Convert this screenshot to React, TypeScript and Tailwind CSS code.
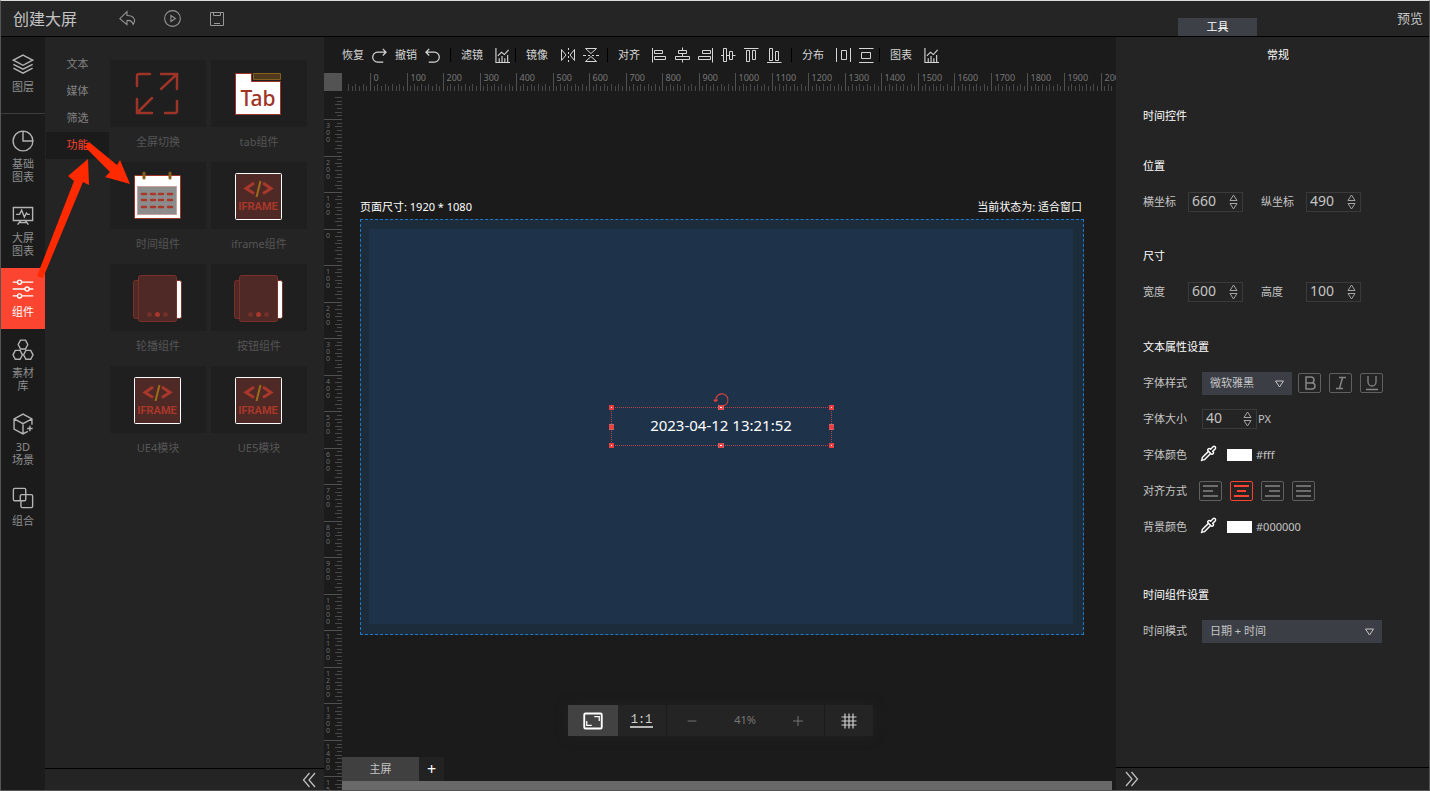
import { useState, type ReactNode } from 'react';
import { Pipette } from 'lucide-react';

interface IconProps {
  children: ReactNode;
  size?: number;
  className?: string;
}

// outline icons, drawn on a 16 unit grid
function Icon({ children, size = 15, className = '' }: IconProps) {
  return (
    <svg
      width={size}
      height={size}
      viewBox="0 0 16 16"
      fill="none"
      stroke="currentColor"
      strokeWidth="1"
      className={`shrink-0 ${className}`}>
      {children}
    </svg>
  );
}

const redoIcon = (
  <Icon>
    <path d="M11.500 1l3.500 3.500L11.500 8M15 4.500H6a5 5 0 0 0 0 10.500h6" strokeWidth="1.300" />
  </Icon>
);
const undoIcon = (
  <Icon>
    <path d="M4.500 1L1 4.500 4.500 8M1 4.500h9a5 5 0 0 1 0 10.500H4" strokeWidth="1.300" />
  </Icon>
);
const chartIcon = (
  <Icon>
    <path
      d="M1 0v15.500h15M4.500 15v-4M7.500 15V8.500M10.500 15v-4M13.500 15V7.500M3 8.500l4-4 3 2.500 4.500-5"
      strokeWidth="1.200"
    />
  </Icon>
);

const tools = {
  flipX: <path d="M1.500 2.500v11L6 8zM14.500 2.500v11L10 8zM8.500 1v2M8.500 5v2M8.500 9v2M8.500 13v2" />,
  flipY: <path d="M2.500 1.500h11L8 6.500zM2.500 14.500h11L8 9.500zM0 8.500h3M5 8.500h2M9 8.500h2M13 8.500h3" />,
  left: <path d="M.5 1v14.500M2.500 3.500h8v3h-8zM2.500 9.500h11v3h-11z" />,
  centerX: <path d="M7.500 .5v3M7.500 6.500v3M7.500 12.500v3M3.500 3.500h8v3h-8zM.5 9.500h14v3h-14z" />,
  right: <path d="M14.500 1v14.500M4.500 3.500h8v3h-8zM.5 9.500h12v3h-12z" />,
  centerY: <path d="M0 8.500h2.500M5.500 8.500h3M11.500 8.500h3M2.500 1.500h3v13h-3zM8.500 4.500h3v8h-3z" />,
  top: <path d="M0 1.500h14.500M2.500 3.500h3v11h-3zM8.500 3.500h3v9h-3z" />,
  bottom: <path d="M0 15.500h14.500M2.500 1.500h3v12h-3zM8.500 4.500h3v9h-3z" />,
  spreadX: <path d="M.5 1v14M14.500 1v14M5.500 3.500h5v9h-5z" />,
  spreadY: <path d="M0 1.500h14.500M0 15.500h14.500M2.500 5.500h9v6h-9z" />,
};

type ToolName = keyof typeof tools;

function Tools({ names, className = '' }: { names: ToolName[]; className?: string }) {
  return (
    <div className={`ml-3 flex ${className}`}>
      {names.map((name) => (
        <button key={name} type="button" aria-label={name}>
          <Icon size={16}>{tools[name]}</Icon>
        </button>
      ))}
    </div>
  );
}

const navItems = [
  {
    lines: ['图层'],
    icon: <path d="M8 1.500l7 3.700-7 3.700-7-3.700zM1 8.200l7 3.600 7-3.600M1 11l7 3.700 7-3.700" />,
  },
  {
    lines: ['基础', '图表'],
    icon: <path d="M8 .8a7.200 7.200 0 1 0 7.200 7.200H8zM8 .8A7.200 7.200 0 0 1 15.200 8" />,
  },
  {
    lines: ['大屏', '图表'],
    icon: <path d="M1 2.500h14v9.500H1zM3 7.500h2.500L7 4.500l2 5 1.500-3 .8 1H13M6.500 12L4 15M9.500 12l2.500 3M5.500 13.500h5" />,
  },
  {
    lines: ['组件'],
    icon: (
      <>
        <path d="M.5 3H4M7 3h8.500M.5 8h9M12.500 8h3M.5 13H4M7 13h8.500" />
        <circle cx="5.500" cy="3" r="1.500" />
        <circle cx="11" cy="8" r="1.500" />
        <circle cx="5.500" cy="13" r="1.500" />
      </>
    ),
  },
  {
    lines: ['素材', '库'],
    icon: (
      <path d="M6.200.8h3.600l1.700 3.200-1.700 3.300H6.200L4.500 4zM2.400 8.300h3.500l1.700 3.200-1.700 3.200H2.400L.7 11.500zM10.100 8.300h3.500l1.700 3.200-1.700 3.200h-3.500l-1.700-3.200z" />
    ),
  },
  {
    lines: ['3D', '场景'],
    icon: <path d="M14.500 8.500V4.300L8 .8 1.500 4.300v7.400L8 15.200l3.500-1.900M1.500 4.300L8 7.800l6.500-3.500M8 7.800v7.400M13 9.300v4M11 11.300h4" />,
  },
  {
    lines: ['组合'],
    icon: <path d="M6 10H2a1 1 0 0 1-1-1V2a1 1 0 0 1 1-1h7a1 1 0 0 1 1 1v3.500H7a1 1 0 0 0-1 1zM6.500 10v4a1 1 0 0 0 1 1H14a1 1 0 0 0 1-1V6.500a1 1 0 0 0-1-1h-4V9a1 1 0 0 1-1 1z" />,
  },
];

const fullscreenArt = (
  <path
    d="M2 14V4a2 2 0 0 1 2-2h11M26 2h16v15M41 3L26 17M2 27v14h15M3 40l14-14M42 29v10a2 2 0 0 1-2 2h-10"
    fill="none"
    stroke="#9e3327"
    strokeWidth="2.500"
    strokeLinecap="round"
  />
);

const tabArt = (
  <>
    <path d="M-.5 1.500H15.500V9.500H44.500V42.500H-.5z" fill="#fff" stroke="#9e3327" />
    <path d="M17.500 1.500h27v6h-27z" fill="#4f3a1e" stroke="#86601e" />
    <text x="22" y="34" textAnchor="middle" fontSize="21" fontWeight="500" fill="#9e3327">
      Tab
    </text>
  </>
);

const calendarArt = (
  <>
    <rect x="-.5" y="1.500" width="46" height="43" rx="1" fill="#fff" stroke="#9e3327" />
    <rect x="2.500" y="12.500" width="39" height="28" fill="#8c8c8c" stroke="#c9a29d" />
    <path d="M9 -1v5M35 -1v5" stroke="#86601e" strokeWidth="3" strokeLinecap="round" />
    <path
      d="M7 20h4M16 20h4M24 20h4M33 20h4M7 26h4M16 26h4M24 26h4M33 26h4M7 33h4M16 33h4M24 33h4M33 33h4"
      stroke="#a8382b"
      strokeWidth="2.500"
      strokeLinecap="round"
    />
  </>
);

const iframeArt = (
  <>
    <rect x="-.5" y="-.5" width="46" height="46" rx="1" fill="#4e2925" stroke="#fff" />
    <path d="M18 9L10 14.500l8 5M27 9l8 5.500-8 5" fill="none" stroke="#a8382b" strokeWidth="3" />
    <path d="M24.500 7l-4 16" stroke="#9c6b1a" strokeWidth="2" />
    <text x="22" y="36" textAnchor="middle" fontSize="11" className="font-['Roboto',sans-serif] font-bold" fill="#a8382b">
      IFRAME
    </text>
  </>
);

const carouselArt = (
  <>
    <rect x="-1.500" y="4.500" width="8" height="38" rx="2" fill="#4e2925" stroke="#7c2f27" />
    <rect x="38.500" y="4.500" width="8" height="38" rx="2" fill="#fff" stroke="#7c2f27" />
    <rect x="3.500" y="-.5" width="38" height="46" rx="2" fill="#4e2925" stroke="#7c2f27" />
    <circle cx="14.500" cy="38.500" r="1.500" fill="none" stroke="#a8382b" />
    <circle cx="22.500" cy="38.500" r="2.500" fill="#a8382b" />
    <circle cx="30.500" cy="38.500" r="1.500" fill="none" stroke="#a8382b" />
  </>
);

const widgets = [
  { name: '全屏切换', art: fullscreenArt },
  { name: 'tab组件', art: tabArt },
  { name: '时间组件', art: calendarArt },
  { name: 'iframe组件', art: iframeArt },
  { name: '轮播组件', art: carouselArt },
  { name: '按钮组件', art: carouselArt },
  { name: 'UE4模块', art: iframeArt },
  { name: 'UE5模块', art: iframeArt },
];

// distance between two 10-unit ruler marks at 41% zoom
const STEP = 694 / 190;
const RULER_START = 28;

function marks(count: number) {
  return Array.from({ length: count }, (_, i) => i - 6).map((n) => ({
    n,
    at: RULER_START + Math.round(n * STEP) + 0.5,
    major: n % 10 === 0,
  }));
}

function TopRuler() {
  return (
    <div className="min-w-0 flex-1 overflow-x-clip">
      <svg width="100%" className="-mt-1 block h-[22px] overflow-visible" fill="#777" fontSize="9" stroke="none">
        {marks(210).map(({ n, at, major }) => (
          <g key={n}>
            <path d={`M${at} ${major ? 4 : n % 2 ? 17 : 15}V22`} stroke={major ? '#505050' : '#484848'} />
            {major && (
              <text x={at + 3} y="12">
                {n * 10}
              </text>
            )}
          </g>
        ))}
      </svg>
    </div>
  );
}

function SideRuler() {
  return (
    <svg className="w-[18px] shrink-0" height="100%" fill="#6c6c6c" fontSize="7" stroke="none">
      {marks(196).map(({ n, at, major }) => (
        <g key={n}>
          <path d={`M${major ? 0 : n % 2 ? 13 : 11} ${at}H18`} stroke={major ? '#505050' : '#484848'} />
          {major &&
            String(Math.abs(n * 10 - 300))
              .split('')
              .map((digit, i) => (
                <text key={i} x="2" y={at + 8 + i * 7}>
                  {digit}
                </text>
              ))}
        </g>
      ))}
    </svg>
  );
}

function Separator() {
  return <span className="h-3.5 w-px shrink-0 bg-black" />;
}

function Toolbar() {
  return (
    <div className="flex h-9 shrink-0 items-center overflow-hidden pl-[18px] whitespace-nowrap text-[#d6d6d6]">
      <div className="mr-2.5 flex items-center gap-2">
        <button type="button" className="flex items-center gap-2">
          恢复 {redoIcon}
        </button>
        <button type="button" className="flex items-center gap-2">
          撤销 {undoIcon}
        </button>
      </div>
      <Separator />
      <button type="button" className="mr-[5px] ml-2.5 flex items-center gap-3">
        滤镜 {chartIcon}
      </button>
      <Separator />
      <span className="ml-2.5">镜像</span>
      <Tools names={['flipX', 'flipY']} className="mr-2 gap-[7px]" />
      <Separator />
      <span className="ml-2.5">对齐</span>
      <Tools names={['left', 'centerX', 'right', 'centerY', 'top', 'bottom']} className="mr-2 gap-[7px]" />
      <Separator />
      <span className="ml-2.5">分布</span>
      <Tools names={['spreadX', 'spreadY']} className="mr-1 gap-[7px]" />
      <Separator />
      <button type="button" className="ml-2.5 flex items-center gap-3">
        图表 {chartIcon}
      </button>
    </div>
  );
}

const handles = [
  '-left-[3px] -top-[3px]',
  'left-1/2 -translate-x-1/2 -top-[3px]',
  '-right-[3px] -top-[3px]',
  '-left-[3px] top-1/2 -translate-y-1/2',
  '-right-[3px] top-1/2 -translate-y-1/2',
  '-left-[3px] -bottom-[3px]',
  'left-1/2 -translate-x-1/2 -bottom-[3px]',
  '-right-[3px] -bottom-[3px]',
];

function Stage() {
  return (
    <div className="min-h-0 flex-1 overflow-hidden pt-[107px] pr-8 pl-[18px]">
      <div className="mb-[3px] flex justify-between pr-0.5 leading-[18px] text-white">
        <span>页面尺寸: 1920 * 1080</span>
        <span>当前状态为: 适合窗口</span>
      </div>
      <div className="aspect-[724/416] border border-dashed border-[#1f78c8] bg-[#1d2c3a] p-2 pt-[9px] pr-2.5 pb-2.5">
        <div className="flex h-full items-center justify-center bg-[#1e324a]">
          <div className="relative flex h-[39px] w-[221px] items-center justify-center border border-dotted border-[#b8434a] pb-0.5 text-[15px] text-white">
            2023-04-12 13:21:52
            {handles.map((place) => (
              <span key={place} className={`absolute h-[5px] w-[5px] border-2 border-[#ee3f40] bg-white ${place}`} />
            ))}
            <Icon className="absolute -top-4 left-1/2 -translate-x-1/2 text-[#e0443c]">
              <path d="M2.500 8A6.500 6.500 0 1 1 5.500 14" strokeWidth="1.200" />
              <path d="M0 8.500h4.500L2 10.500z" fill="currentColor" />
            </Icon>
          </div>
        </div>
      </div>
    </div>
  );
}

function ZoomBar() {
  return (
    <div className="pointer-events-none absolute inset-x-0 bottom-[54px] flex justify-center">
      <div className="pointer-events-auto flex h-[31px] gap-px text-[#cfcfcf] shadow-[0_0_12px_#222]">
        <div className="flex">
          <button type="button" aria-label="适合窗口" className="flex w-[50px] items-center justify-center bg-[#424242] text-white">
            <Icon size={20}>
              <rect x="1" y="2" width="14" height="12" rx="1" strokeWidth="1.500" />
              <path d="M9 4.500h4v3.500M7 11.500H3V8" />
            </Icon>
          </button>
          <button type="button" className="flex w-12 items-center justify-center bg-[#242424]">
            <span className="border-b-2 border-[#b5b5b5] px-px font-['Liberation_Mono',monospace] text-xs leading-3">1:1</span>
          </button>
        </div>
        <div className="flex w-[157px] items-center justify-between bg-[#242424] px-5 text-[#777]">
          <button type="button" aria-label="缩小">
            <Icon size={10}>
              <path d="M1 8h14" strokeWidth="1.500" />
            </Icon>
          </button>
          <span>41%</span>
          <button type="button" aria-label="放大">
            <Icon size={10}>
              <path d="M0 8h16M8 0v16" strokeWidth="1.500" />
            </Icon>
          </button>
        </div>
        <button type="button" aria-label="网格" className="flex w-12 items-center justify-center bg-[#242424]">
          <Icon size={16}>
            <path d="M4 .5v15M8 .5v15M12 .5v15M.5 4h15M.5 8h15M.5 12h15" strokeWidth="1.200" />
          </Icon>
        </button>
      </div>
    </div>
  );
}

interface NumberFieldProps {
  id: string;
  label: string;
  initial: number;
  labelClass: string;
}

function NumberField({ id, label, initial, labelClass }: NumberFieldProps) {
  const [value, setValue] = useState<number>(initial);

  return (
    <>
      <label htmlFor={id} className={`shrink-0 ${labelClass}`}>
        {label}
      </label>
      <div className="flex h-5 w-[55px] shrink-0 items-center border border-[#3a3a3a]">
        <input
          id={id}
          inputMode="numeric"
          value={value}
          onChange={(event) => setValue(Number(event.target.value) || 0)}
          className="w-10 min-w-0 bg-transparent pb-0.5 pl-[3px] text-sm leading-4 outline-none"
        />
        <div className="flex flex-col gap-0.5 text-[#a5a5a5]">
          <button type="button" aria-label={`${label} +`} onClick={() => setValue(value + 1)}>
            <svg width="9" height="7" fill="none" stroke="currentColor" className="block">
              <path d="M1 6.500L4.500 1 8 6.500z" />
            </svg>
          </button>
          <button type="button" aria-label={`${label} -`} onClick={() => setValue(value - 1)}>
            <svg width="9" height="7" fill="none" stroke="currentColor" className="block">
              <path d="M1 .5L4.500 6 8 .5z" />
            </svg>
          </button>
        </div>
      </div>
    </>
  );
}

function SelectField({ id, options, className }: { id: string; options: string[]; className: string }) {
  return (
    <div className={`relative h-[23px] shrink-0 ${className}`}>
      <select id={id} className="h-full w-full appearance-none bg-[#3b3e44] pl-2 outline-none">
        {options.map((option) => (
          <option key={option}>{option}</option>
        ))}
      </select>
      <svg width="9" height="8" fill="none" stroke="currentColor" className="pointer-events-none absolute top-2 right-2">
        <path d="M.5 1L4.500 7 8.500 1z" />
      </svg>
    </div>
  );
}

function IconToggle({ label, active, onClick, children }: { label: string; active?: boolean; onClick?: () => void; children: ReactNode }) {
  return (
    <button
      type="button"
      aria-label={label}
      onClick={onClick}
      className={`flex h-5 w-[23px] items-center justify-center rounded-xs border ${
        active ? 'border-[#fb4330] text-[#fb4330]' : 'border-[#606060] text-[#858585]'
      }`}>
      {children}
    </button>
  );
}

function ColorRow({ id, label, value }: { id: string; label: string; value: string }) {
  return (
    <div className="flex h-9 items-center">
      <label htmlFor={id} className="w-[57px]">
        {label}
      </label>
      <Pipette size={17} strokeWidth={2} className="mr-2.5 mb-1 text-white" />
      <button id={id} type="button" aria-label={value} className="mr-1 h-3 w-[25px] bg-white" />
      <span>{value}</span>
    </div>
  );
}

const aligns = [
  { name: '左对齐', d: 'M0 1h15M0 6h10M0 11h15' },
  { name: '居中', d: 'M0 1h15M3 6h9M0 11h15' },
  { name: '右对齐', d: 'M0 1h15M4 6h11M0 11h15' },
  { name: '两端对齐', d: 'M0 1h15M0 6h15M0 11h15' },
];

function Inspector() {
  const [align, setAlign] = useState<string>('居中');

  return (
    <aside className="flex w-[313px] shrink-0 flex-col bg-[#242424] text-[#c4c4c4]">
      <h2 className="h-9 pl-[11px] text-center leading-9 text-white">常规</h2>
      <div className="flex-1 pt-[25px] pl-[27px]">
        <h3 className="h-9 leading-9 text-white">时间控件</h3>

        <h3 className="mt-3.5 h-9 leading-9 text-white">位置</h3>
        <div className="flex h-9 items-center">
          <NumberField id="pos-x" label="横坐标" initial={660} labelClass="w-[45px]" />
          <NumberField id="pos-y" label="纵坐标" initial={490} labelClass="ml-[18px] w-[45px]" />
        </div>

        <h3 className="mt-[18px] h-9 leading-9 text-white">尺寸</h3>
        <div className="flex h-9 items-center">
          <NumberField id="width" label="宽度" initial={600} labelClass="w-[45px]" />
          <NumberField id="height" label="高度" initial={100} labelClass="ml-[18px] w-[45px]" />
        </div>

        <h3 className="mt-[19px] h-9 leading-9 text-white">文本属性设置</h3>
        <div className="flex h-9 items-center">
          <label htmlFor="font-family" className="w-[59px]">
            字体样式
          </label>
          <SelectField id="font-family" options={['微软雅黑', '宋体', '黑体']} className="w-[90px]" />
          <div className="ml-1.5 flex gap-2">
            <IconToggle label="加粗">
              <Icon size={16}>
                <path d="M4 2h5a3 3 0 0 1 0 6H4zM4 8h6a3 3 0 0 1 0 6H4z" strokeWidth="1.500" />
              </Icon>
            </IconToggle>
            <IconToggle label="斜体">
              <Icon size={16}>
                <path d="M6 2.500h7M3 13.500h7M9.500 2.500l-3 11" strokeWidth="1.500" />
              </Icon>
            </IconToggle>
            <IconToggle label="下划线">
              <Icon size={16}>
                <path d="M4 1v6a4 4 0 0 0 8 0V1M2 14.500h12" strokeWidth="1.300" />
              </Icon>
            </IconToggle>
          </div>
        </div>
        <div className="flex h-9 items-center">
          <NumberField id="font-size" label="字体大小" initial={40} labelClass="w-[59px]" />
          <span className="ml-px">PX</span>
        </div>
        <ColorRow id="font-color" label="字体颜色" value="#fff" />
        <div className="flex h-9 items-center">
          <span className="w-14">对齐方式</span>
          <div className="flex gap-2">
            {aligns.map(({ name, d }) => (
              <IconToggle key={name} label={name} active={align === name} onClick={() => setAlign(name)}>
                <svg width="15" height="12" fill="none" stroke="currentColor" strokeWidth={align === name ? 2 : 1.3}>
                  <path d={d} />
                </svg>
              </IconToggle>
            ))}
          </div>
        </div>
        <ColorRow id="bg-color" label="背景颜色" value="#000000" />

        <h3 className="mt-8 h-9 leading-9 text-white">时间组件设置</h3>
        <div className="flex h-9 items-center">
          <label htmlFor="time-mode" className="w-[59px]">
            时间模式
          </label>
          <SelectField id="time-mode" options={['日期 + 时间', '日期', '时间']} className="w-[180px]" />
        </div>
      </div>
      <div className="flex h-[23px] items-center border-t border-black pl-2">
        <button type="button" aria-label="收起右侧面板">
          <Icon size={16}>
            <path d="M2 1l6 7-6 7M7.500 1l6 7-6 7" strokeWidth="1.200" />
          </Icon>
        </button>
      </div>
    </aside>
  );
}

function SideNav() {
  return (
    <nav className="w-11 shrink-0 bg-[#1b1b1b] pt-1.5 text-[#8d8d8d]">
      {navItems.map(({ lines, icon }, index) => (
        <div key={lines.join('')} className={index === 0 ? 'mb-1.5 border-b border-[#3c3c3c] pb-[9px]' : ''}>
          <button
            type="button"
            className={`flex w-full flex-col items-center gap-[5px] pt-2.5 pb-[11px] leading-[13px] ${
              lines[0] === '组件' ? 'bg-[#fc4530] text-white' : ''
            }`}>
            <Icon size={22} className={lines[0] === '组件' ? '' : 'text-[#b4b4b4]'}>
              {icon}
            </Icon>
            <span>
              {lines.map((line) => (
                <span key={line} className="block">
                  {line}
                </span>
              ))}
            </span>
          </button>
        </div>
      ))}
    </nav>
  );
}

function WidgetPanel() {
  const [category, setCategory] = useState<string>('功能');

  return (
    <aside className="flex w-[279px] shrink-0 flex-col bg-[#242424]">
      <div className="flex flex-1">
        <div className="w-16 shrink-0 pt-3.5 pl-px">
          {['文本', '媒体', '筛选', '功能'].map((name) => (
            <button
              key={name}
              type="button"
              onClick={() => setCategory(name)}
              className={`block h-[27px] w-full ${name === category ? 'bg-[#1b1b1b] text-[#fb4330]' : 'text-[#828282]'}`}>
              {name}
            </button>
          ))}
        </div>
        <div className="ml-px grid grid-cols-[96px_96px] content-start gap-x-[5px] pt-[23px]">
          {widgets.map(({ name, art }) => (
            <button key={name} type="button" className="h-[102px] text-[#555]">
              <span className="flex h-[67px] items-center justify-center bg-[#1f1f1f] pt-px pr-0.5">
                <svg width="44" height="44" className="overflow-visible">
                  {art}
                </svg>
              </span>
              <span className="block h-[35px] pt-[7px] leading-4">{name}</span>
            </button>
          ))}
        </div>
      </div>
      <div className="flex h-[22px] items-center justify-end border-t border-black pr-[7px] text-[#c4c4c4]">
        <button type="button" aria-label="收起左侧面板">
          <Icon size={16}>
            <path d="M8.500 1l-6 7 6 7M14 1L8 8l6 7" strokeWidth="1.200" />
          </Icon>
        </button>
      </div>
    </aside>
  );
}

function Header() {
  return (
    <header className="flex h-9 shrink-0 items-center border-b border-black bg-[#252525] text-[#c4c4c4]">
      <h1 className="ml-3 w-[106px] text-base">创建大屏</h1>
      <div className="flex gap-7 text-[#979797]">
        <button type="button" aria-label="返回">
          <Icon size={17}>
            <path d="M7.500 1.500L.8 8.200l6.700 5.500V9.800c3.500-.3 5 1 5.800 3.700C16.500 9 13.500 5 7.500 5.200z" />
          </Icon>
        </button>
        <button type="button" aria-label="播放">
          <Icon size={17}>
            <circle cx="8" cy="8" r="7.400" />
            <path d="M6.500 5.200v5.600L10.800 8z" />
          </Icon>
        </button>
        <button type="button" aria-label="保存">
          <Icon size={16}>
            <path d="M1.500 1.500h13v13h-13zM4.500 1.500v3h7v-3M5 12.500h6" />
          </Icon>
        </button>
      </div>
      <div className="ml-auto flex w-[251px] items-center justify-between self-stretch pr-1.5">
        <button type="button" className="h-[18px] w-[79px] self-end bg-[#3d4046] text-white">
          工具
        </button>
        <a href="#preview" className="text-[13px]">
          预览
        </a>
      </div>
    </header>
  );
}

// red pointers leading from the nav entry to the category and on to the widget
function GuideArrows() {
  return (
    <svg width="140" height="290" viewBox="1 1 140 290" fill="#ff2a00" className="pointer-events-none absolute top-0 left-0">
      <path d="M37 276L74 181 68 176 88 159 89 185 83 182 43 278z" />
      <path d="M89 142L117 165 120 160 130 184 105 177 110 172 85 147z" />
    </svg>
  );
}

export default function App() {
  return (
    <div className="relative flex h-screen min-h-[700px] flex-col overflow-hidden border border-[#555] border-t-[#d9dedb] bg-[#1b1b1b] font-['Noto_Sans','Noto_Sans_CJK_SC',sans-serif] text-[11px]">
      <Header />
      <div className="flex min-h-0 flex-1">
        <SideNav />
        <WidgetPanel />
        <main className="relative flex min-w-0 flex-1 flex-col">
          <Toolbar />
          <div className="flex h-[18px] shrink-0">
            <div className="w-[18px] shrink-0 bg-[#535353]" />
            <TopRuler />
          </div>
          <div className="flex min-h-0 flex-1">
            <SideRuler />
            <div className="flex min-w-0 flex-1 flex-col">
              <Stage />
              <div className="flex h-6 shrink-0">
                <button type="button" className="w-[77px] bg-[#404040] text-[#c4c4c4]">
                  主屏
                </button>
                <button type="button" className="w-[25px] bg-[#222] text-base leading-6 text-white">
                  +
                </button>
              </div>
              <div className="mr-1 h-[9px] shrink-0 bg-[#696969]" />
            </div>
          </div>
          <ZoomBar />
        </main>
        <Inspector />
      </div>
      <GuideArrows />
    </div>
  );
}
